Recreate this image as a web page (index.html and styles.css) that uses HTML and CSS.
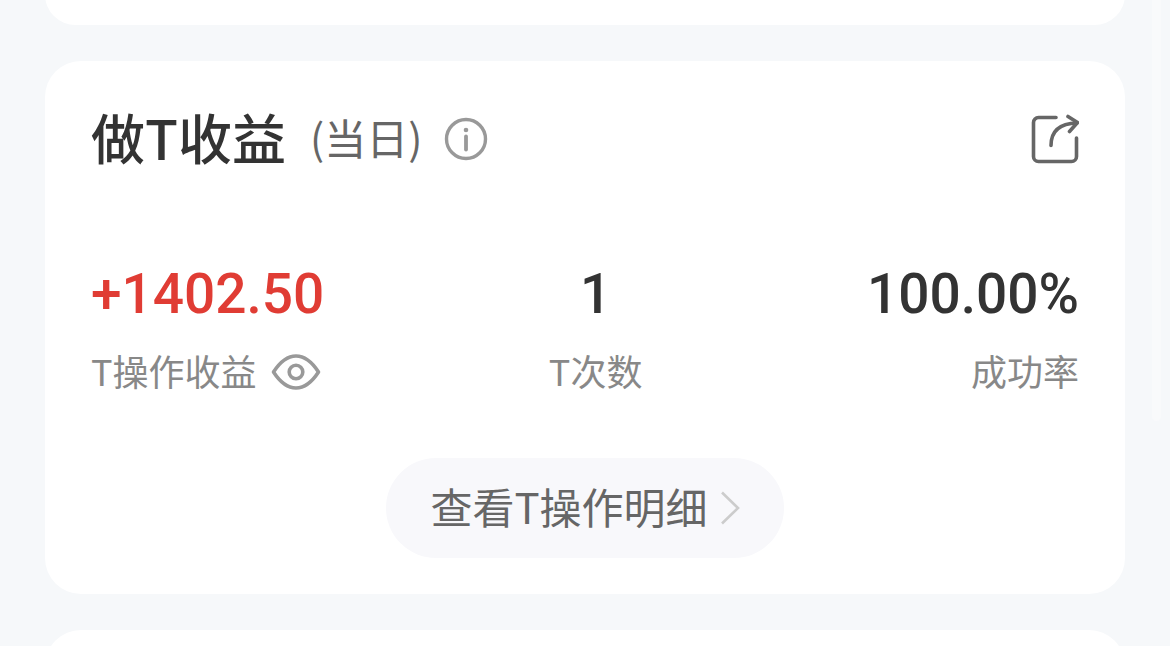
FILE: index.html
```html
<!DOCTYPE html>
<html lang="zh-CN">
<head>
  <meta charset="UTF-8">
  <meta name="viewport" content="width=device-width, initial-scale=1.0">
  <title>做T收益</title>
  <link rel="stylesheet" href="styles.css">
</head>
<body>
  <main class="page">
    <section class="card card-prev"></section>

    <section class="card">
      <header class="card-head">
        <h2 class="title">做T收益</h2>
        <span class="period">(当日)</span>
        <button class="icon-btn info" aria-label="说明">
          <svg width="44" height="44" viewBox="0 0 44 44" fill="none" stroke="#999" stroke-width="3.4" stroke-linecap="round">
            <circle cx="22" cy="22" r="19.5"/>
            <path d="M22 19.5v13" stroke-width="3.8"/>
            <circle cx="22" cy="13" r="2.3" fill="#999" stroke="none"/>
          </svg>
        </button>
        <button class="icon-btn share" aria-label="分享">
          <svg width="48" height="50" viewBox="0 0 48 50" fill="none" stroke="#666" stroke-width="3.6" stroke-linecap="round" stroke-linejoin="round">
            <path d="M25 3.5H7.5a5 5 0 0 0-5 5V42.5a5 5 0 0 0 5 5H40.500a5 5 0 0 0 5-5V24"/>
            <path d="M20 31.500C20 18 28 9.500 46 9"/>
            <path d="M37 2.500L46.500 8.500L38.500 17.500"/>
          </svg>
        </button>
      </header>

      <div class="stats">
        <div class="stat">
          <strong class="value up">+1402.50</strong>
          <div class="label">
            <span>T操作收益</span>
            <button class="icon-btn" aria-label="显示或隐藏金额">
              <svg width="50" height="36" viewBox="0 0 50 36" fill="none" stroke="#999" stroke-width="3.6" stroke-linejoin="round">
                <path d="M2.5 18C9 8 16 2 25 2s16 6 22.5 16C41 28 34 34 25 34S9 28 2.5 18z"/>
                <circle cx="25" cy="18" r="6.8"/>
              </svg>
            </button>
          </div>
        </div>
        <div class="stat center">
          <strong class="value">1</strong>
          <div class="label"><span>T次数</span></div>
        </div>
        <div class="stat right">
          <strong class="value">100.00%</strong>
          <div class="label"><span>成功率</span></div>
        </div>
      </div>

      <a class="detail" href="#detail">
        <span>查看T操作明细</span>
        <svg width="20" height="34" viewBox="0 0 20 34" fill="none" stroke="#ccc" stroke-width="2.6">
          <path d="M2 1.5L18 17L2 32.5"/>
        </svg>
      </a>
    </section>

    <section class="card card-next"></section>
  </main>
  <div class="scroll-thumb"></div>
</body>
</html>
```

FILE: styles.css
```css
* {
  box-sizing: border-box;
}

body, html {
  margin: 0;
  padding: 0;
  height: 100%;
  overflow: hidden;
}

body {
  background: #f6f8fa;
  color: #333;
  font-family: 'Noto Sans CJK SC', sans-serif;
}

.page {
  display: flex;
  flex-direction: column;
  gap: 36px;
  height: 100%;
  padding: 0 45px;
  overflow: hidden;
}

.card {
  flex-shrink: 0;
  padding: 46px 46px 36px;
  background: #fff;
  border-radius: 36px;
}

/* cards cut off by the edges of the screen */
.card-prev {
  height: 61px;
  margin-top: -36px;
  padding: 0;
}

.card-next {
  flex: 1 1 0;
  min-height: 0;
  margin-bottom: -36px;
  padding: 0;
  border-radius: 36px 36px 0 0;
}

/* header */
.card-head {
  display: flex;
  align-items: center;
  height: 64px;
}

.title {
  margin: 0;
  padding-bottom: 4px;
  font-size: 54px;
  font-weight: 500;
  line-height: 60px;
}

.period {
  margin-left: 24px;
  padding-bottom: 4px;
  color: #666;
  font-size: 42px;
  line-height: 60px;
}

.icon-btn {
  display: flex;
  padding: 0;
  border: none;
  background: none;
  cursor: pointer;
}

.info {
  margin-left: 22px;
}

.share {
  margin-left: auto;
}

/* numbers */
.stats {
  display: flex;
  justify-content: space-between;
  margin-top: 93px;
}

.stat {
  display: flex;
  flex-direction: column;
  gap: 18px;
}

.center {
  align-items: center;
}

.right {
  align-items: flex-end;
}

.value {
  font-family: Roboto, sans-serif;
  font-size: 55px;
  font-weight: 500;
  line-height: 60px;
}

.up {
  color: #e03c34;
}

.label {
  display: flex;
  align-items: center;
  gap: 14px;
  height: 60px;
  color: #888;
  font-size: 36px;
  line-height: 56px;
}

.label span, .detail span {
  padding-bottom: 4px;
}

/* link to the details */
.detail {
  display: flex;
  align-items: center;
  gap: 12px;
  width: fit-content;
  height: 100px;
  margin: 56px auto 0;
  padding: 0 44px;
  border-radius: 50px;
  background: #f8f8fb;
  color: #666;
  font-size: 42px;
  line-height: 60px;
  text-decoration: none;
}

.scroll-thumb {
  position: absolute;
  top: 0;
  right: 9px;
  width: 9px;
  height: 421px;
  border-radius: 0 0 5px 5px;
  background: #f9fafb;
}
```
